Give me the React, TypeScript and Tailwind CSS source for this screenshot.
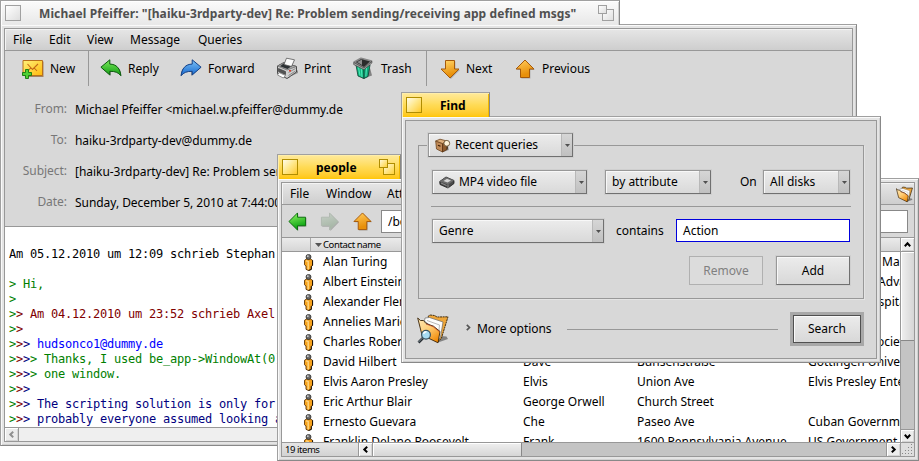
import React from "react";

const TITLE = "text-[12px] font-bold leading-[16px] whitespace-pre";

function CloseBox({ active }: { active: boolean }) {
  return (
    <span
      className={
        active
          ? "block size-4 shrink-0 border border-[#b08d00] bg-linear-to-br from-[#fffbe8] via-[#ffe787] to-[#ffca10]"
          : "block size-4 shrink-0 border border-[#a0a0a0] bg-linear-to-br from-[#ffffff] to-[#dedede]"
      }
    />
  );
}

function ZoomBox({ active }: { active: boolean }) {
  const stroke = active ? "#b08d00" : "#a0a0a0";
  const id = active ? "zoomActive" : "zoomIdle";
  return (
    <svg width="16" height="16" viewBox="0 0 16 16" className="block shrink-0">
      <defs>
        <linearGradient id={id} x1="0" y1="0" x2="1" y2="1">
          <stop offset="0" stopColor={active ? "#fffbe0" : "#ffffff"} />
          <stop offset="1" stopColor={active ? "#ffd030" : "#dedede"} />
        </linearGradient>
      </defs>
      <rect x="4.5" y="4.5" width="11" height="11" fill={`url(#${id})`} stroke={stroke} />
      <rect x="0.5" y="0.5" width="8" height="8" fill={`url(#${id})`} stroke={stroke} />
    </svg>
  );
}

function WindowTab({ title, active, zoom, className, track }: { title: string; active: boolean; zoom: boolean; className: string; track: string }) {
  const skin = active
    ? "border-[#a0a0a0] border-r-[#888888] bg-linear-to-b from-[#ffea9a] via-[#ffdb55] to-[#ffc600] shadow-[inset_1px_1px_0_#ffeeaa,inset_-1px_0_0_#f0b800]"
    : "border-[#a0a0a0] border-r-[#888888] bg-linear-to-b from-[#fbfbfb] to-[#e8e8e8] shadow-[inset_1px_1px_0_#ffffff,inset_-1px_0_0_#d0d0d0]";
  return (
    <div className={`relative z-10 -mb-px flex h-[25px] items-start border border-b-0 pt-1 pl-1 ${skin} ${className}`}>
      <CloseBox active={active} />
      <span className={`${TITLE} grow ${track} ${active ? "text-black" : "text-[#505050]"}`}>{title}</span>
      {zoom && <ZoomBox active={active} />}
    </div>
  );
}

function Frame({ children, className }: { children: React.ReactNode; className: string }) {
  return (
    <div className={`border border-[#a0a0a0] border-r-[#888888] border-b-[#888888] bg-[#e4e4e4] p-[3px] shadow-[inset_1px_1px_0_#fafafa,inset_-1px_-1px_0_#d0d0d0] ${className}`}>
      <div className="flex h-full flex-col overflow-hidden border border-[#989898] bg-[#d8d8d8]">{children}</div>
    </div>
  );
}

function Arrow({ kind, fill, edge, className }: { kind: "left" | "right" | "up" | "down"; fill: [string, string]; edge: string; className: string }) {
  const shape = {
    left: "M1 10 10 1v4.500h8.500v9H10V19z",
    right: "M19 10 10 1v4.500H1.500v9H10V19z",
    up: "M10 1 1 10h4.500v8.500h9V10H19z",
    down: "M10 19 1 10h4.500V1.500h9V10H19z",
  }[kind];
  const id = `arrow-${kind}-${fill[1].slice(1)}`;
  return (
    <svg width="20" height="20" viewBox="0 0 20 20" className={className}>
      <defs>
        <linearGradient id={id} x1="0" y1="0" x2=".3" y2="1">
          <stop offset="0.1" stopColor={fill[0]} />
          <stop offset="0.9" stopColor={fill[1]} />
        </linearGradient>
      </defs>
      <path d={shape} transform="translate(.9 .9)" fill="#000" opacity=".22" />
      <path d={shape} fill={`url(#${id})`} stroke={edge} strokeWidth="1" strokeLinejoin="round" />
    </svg>
  );
}

function NewMailIcon() {
  return (
    <svg width="22" height="20" viewBox="0 0 22 20" className="block">
      <defs>
        <linearGradient id="mail" x1="0" y1="0" x2="1" y2="1">
          <stop offset="0" stopColor="#fff27a" />
          <stop offset="1" stopColor="#ffb90c" />
        </linearGradient>
      </defs>
      <path d="M2 2.500h19.500V18H3z" fill="#8b6030" opacity=".7" />
      <path d="M1 1.500h19.500v15H1z" fill="url(#mail)" stroke="#b8701c" />
      <path d="M6 12l3-3.500M15 12l-3.200-3.500M5.500 5l5 5.500L16 5" fill="none" stroke="#c56a16" strokeWidth="1.100" />
      <path d="M3.500 10.500h3v3h3v3h-3v3h-3v-3h-3v-3h3z" fill="#4ed034" stroke="#15770e" strokeWidth=".9" />
    </svg>
  );
}

function ReplyIcon({ flip }: { flip?: boolean }) {
  const id = flip ? "fwd" : "rep";
  return (
    <svg width="22" height="19" viewBox="0 0 22 19" className="block">
      <defs>
        <linearGradient id={id} x1="0" y1="0" x2="0" y2="1">
          <stop offset="0" stopColor={flip ? "#7cc2f7" : "#7cec5c"} />
          <stop offset="1" stopColor={flip ? "#1567ce" : "#0f9a12"} />
        </linearGradient>
      </defs>
      <g transform={flip ? "translate(22 0) scale(-1 1)" : undefined}>
        <path d="M2 9.500 11 17v-4.500c5 0 8 1.500 10.500 5-.2-4-1.500-7-3-8.500z" fill="#000" opacity=".3" />
        <path d="M.9 8.200 9.800.8v4.300c6.500 0 10.600 4.500 11 11.600-2.400-3.200-5.500-4.400-11-4.400V16z" fill={`url(#${id})`} stroke={flip ? "#123f86" : "#0a5a0c"} strokeLinejoin="round" />
      </g>
    </svg>
  );
}

function PrintIcon() {
  return (
    <svg width="23" height="23" viewBox="0 0 23 23" className="block">
      <path d="M9 22 22 16v-3l-9 8z" fill="#666" opacity=".6" />
      <path d="M1.500 9 8 5.500 20.500 9.500V15L11 21.500 1.500 16.500z" fill="#cfcfcf" stroke="#3d3d3d" strokeWidth=".9" />
      <path d="M1.500 9 11 13l9.500-3.500L8 5.500z" fill="#a8a8a8" stroke="#666" strokeWidth=".7" />
      <path d="M4 9.300 7.500 6.500l9 2-5 3.500z" fill="#2c3134" />
      <path d="M8 7.500 10.500 1.200l8 1.600-3 6.700z" fill="#fafafa" stroke="#555" strokeWidth=".8" />
      <path d="M2.500 11.500l7 3v3l-7-3z" fill="#555" stroke="#333" strokeWidth=".6" />
      <path d="M3 15.500l6.500 3-2.200 2.500L1.500 18z" fill="#fff" stroke="#666" strokeWidth=".7" />
      <path d="M12.500 15.500l7-4M12.500 18.500l7-4.500" stroke="#8a8a8a" />
      <path d="M13 13.700h2" stroke="#e23c2a" strokeWidth="1.500" />
    </svg>
  );
}

function TrashIcon() {
  return (
    <svg width="20" height="23" viewBox="0 0 20 23" className="block">
      <path d="M9 22 19 18.500 17 11z" fill="#555" opacity=".65" />
      <path d="M3 8l2 11 6 2.500V11z" fill="#12b880" stroke="#0b3f30" strokeWidth=".8" />
      <path d="M11 11v10.500l4-2L17 8z" fill="#0fa87a" stroke="#0b3f30" strokeWidth=".8" />
      <path d="M5.500 10.500l1.500 8M8.300 11.500l.7 8.500M13.500 11l-.7 8.500" stroke="#4fe8b8" />
      <path d="M1.200 5 8 1.200 18.500 4 11 11z" fill="#2b2b2b" stroke="#888" strokeWidth="1.600" strokeLinejoin="round" />
      <path d="M4 5l5-2.500V8z" fill="#8c8c8c" />
      <path d="M.700 5.500v2L11 12.700 18.900 6V4.300L11 11z" fill="#aaa" stroke="#333" strokeWidth=".6" />
    </svg>
  );
}

function PersonIcon() {
  return (
    <svg width="11" height="17" viewBox="0 0 11 17" className="block">
      <path d="M1.500 6.300 3.500 5h4l2 1.300v5L8.300 12.500v2.800L5.500 16.500 3 15.300V12L1.500 10.800z" fill="#f7a31c" stroke="#5c3408" strokeWidth=".9" />
      <path d="M3 6.800l2.200.8v7.600" fill="none" stroke="#ffd27a" strokeWidth="1.500" />
      <path d="M9.600 6.300v5L8.300 12.500v2.900L5.500 16.600" fill="none" stroke="#1c1003" strokeWidth="1" />
      <circle cx="5.500" cy="2.900" r="2.500" fill="#6c6c6c" stroke="#222" strokeWidth=".7" />
      <circle cx="4.800" cy="2.200" r=".9" fill="#ccc" />
    </svg>
  );
}

function FolderQueryIcon({ size, lens }: { size: number; lens?: boolean }) {
  const id = lens ? "folderLarge" : "folderSmall";
  const edge = lens ? 0.9 : 1.3;
  return (
    <svg width={size} height={size} viewBox="0 0 32 32" className="block">
      <defs>
        <linearGradient id={id} x1="0" y1="0" x2=".7" y2="1">
          <stop offset="0" stopColor="#ffe9b8" />
          <stop offset=".5" stopColor="#ffcf7a" />
          <stop offset="1" stopColor="#f28c0a" />
        </linearGradient>
      </defs>
      <path d="M21 29.500 31 26l-1.500-2.500L24 23z" fill="#555" opacity=".65" />
      <path d="M11 3.500 13 2l4.500.5L20 4l11-.2L24.500 25 21 29z" fill="#eda63a" stroke="#2f1d05" strokeWidth={edge} strokeDasharray={lens ? "2 .6" : undefined} />
      <path d="M7.500 8 8 5l4.500-.5L26 9l-2.500 15-2.500 4-5-13z" fill="#fdfdfd" stroke="#6a6a6a" strokeWidth=".7" />
      <path d="M10 7.500l12.500 4.500-.8 8" fill="none" stroke="#b0b0b0" strokeWidth=".9" />
      <path d="M.7 5 3.500 7.500h3L9 10.500l7.500 2.700L23 18.500l-2 11.300L5 22z" fill={`url(#${id})`} stroke="#3a2408" strokeWidth={edge} strokeLinejoin="round" />
      <path d="M9 11l7 2.600 6.500 5.200" fill="none" stroke="#c4442a" strokeWidth=".7" />
      {lens && (
        <g>
          <path d="M6 25 1.500 29.500" stroke="#252b30" strokeWidth="2.600" />
          <path d="M5.500 25 1.500 29" stroke="#9fb0b8" strokeWidth=".8" />
          <circle cx="9" cy="21.700" r="4.400" fill="#a7dcf2" stroke="#39535f" strokeWidth="1.200" />
          <path d="M6.500 20.800a3 3 0 0 1 3-2" fill="none" stroke="#fff" strokeWidth="1.400" />
        </g>
      )}
    </svg>
  );
}

function BoxIcon() {
  return (
    <svg width="16" height="15" viewBox="0 0 16 15" className="block">
      <path d="M7 14.500 14 12l-1-4z" fill="#666" opacity=".5" />
      <path d="M.7 3 7.500 5.500V14L1.500 11z" fill="#c08a58" stroke="#6d4520" strokeWidth=".8" />
      <path d="M7.500 5.500 12 3v8.500L7.500 14z" fill="#8f5b2c" stroke="#5b3210" strokeWidth=".8" />
      <path d="M.7 3 5 1.200 12 3 7.500 5.500z" fill="#e0b07c" stroke="#6d4520" strokeWidth=".8" />
      <path d="M3 7.200l2.500 1" stroke="#3b1d05" strokeWidth="1.200" />
      <circle cx="11.800" cy="5.300" r="2.900" fill="#fff4da" stroke="#6b5638" strokeWidth=".9" />
      <path d="M12.500 8.500l-.5 3" stroke="#4a3a28" strokeWidth="1.300" />
    </svg>
  );
}

function ClapIcon() {
  return (
    <svg width="16" height="13" viewBox="0 0 16 13" className="block">
      <path d="M.7 5.500 7 1l8 3.500v3L9 12 1 8.500z" fill="#4a4a4a" stroke="#1c1c1c" strokeWidth=".8" />
      <path d="M.7 5.500 7 1l8 3.500L9 8.500z" fill="#6d6d6d" />
      <path d="M4.500 5 8 2.800l4 1.700-3.500 2z" fill="#d6d6d6" />
      <path d="M9 8.500V12M2 7l5.500 2.500" stroke="#a0a0a0" strokeWidth=".8" />
    </svg>
  );
}

function ScrollArrow({ dir, muted, className }: { dir: "l" | "r" | "u" | "d"; muted?: boolean; className: string }) {
  const turn = { l: 0, u: 90, r: 180, d: 270 }[dir];
  return (
    <span className={`flex shrink-0 items-center justify-center border-[#989898] bg-[#ececec] shadow-[inset_1px_1px_0_#fff,inset_-1px_-1px_0_#d4d4d4] ${className}`}>
      <svg width="7" height="7" viewBox="0 0 7 7">
        <path d="M5.200.8 2.300 3.500 5.200 6.200" transform={`rotate(${turn} 3.5 3.5)`} fill="none" stroke={muted ? "#909090" : "#000"} strokeWidth="2" />
      </svg>
    </span>
  );
}

function MenuBar({ children }: { children: React.ReactNode }) {
  return (
    <div className="flex h-[22px] shrink-0 border-b border-[#989898] bg-linear-to-b from-[#e6e6e6] to-[#cecece] leading-[21px] shadow-[inset_1px_1px_0_#f4f4f4]">
      {children}
    </div>
  );
}

const HEADERS: [string, string][] = [
  ["From:", "Michael Pfeiffer <michael.w.pfeiffer@dummy.de"],
  ["To:", "haiku-3rdparty-dev@dummy.de"],
  ["Subject:", "[haiku-3rdparty-dev] Re: Problem sending"],
  ["Date:", "Sunday, December 5, 2010 at 7:44:00"],
];

const QUOTE = ["text-[#008000]", "text-[#800000]", "text-[#000080]", "text-[#008000]"];

const LINES: [number, string, string][] = [
  [0, "", ""],
  [0, "Am 05.12.2010 um 12:09 schrieb Stephan", "text-black"],
  [0, "", ""],
  [1, " Hi,", "text-[#008000]"],
  [1, "", ""],
  [2, " Am 04.12.2010 um 23:52 schrieb Axel", "text-[#800000]"],
  [2, "", ""],
  [3, " hudsonco1@dummy.de", "text-[#0000ff]"],
  [4, " Thanks, I used be_app->WindowAt(0)", "text-[#008000]"],
  [4, " one window.", "text-[#008000]"],
  [3, "", ""],
  [3, " The scripting solution is only for", "text-[#000080]"],
  [3, " probably everyone assumed looking at", "text-[#000080]"],
];

function Tool({ icon, label, className, gap }: { icon: React.ReactNode; label: string; className: string; gap: string }) {
  return (
    <div className={`flex items-center ${gap} ${className}`}>
      {icon}
      <span className="leading-[16px]">{label}</span>
    </div>
  );
}

function MailWindow() {
  return (
    <section className="absolute top-0 left-0 w-[857px]">
      <WindowTab title={'Michael Pfeiffer: "[haiku-3rdparty-dev] Re: Problem sending/receiving app defined msgs"'} active={false} zoom className="w-[620px] pr-[5px]" track="pl-[18px] pt-px tracking-[0.095px]" />
      <Frame className="h-[422px]">
        <MenuBar>
          <span className="ml-2 w-9">File</span>
          <span className="w-[38px]">Edit</span>
          <span className="w-[43px]">View</span>
          <span className="w-[68px]">Message</span>
          <span>Queries</span>
        </MenuBar>
        <div className="flex h-[35px] shrink-0">
          <div className="flex w-[84px] border-r border-[#989898] pl-[17px]">
            <Tool icon={<NewMailIcon />} label="New" className="" gap="gap-1.5" />
          </div>
          <div className="flex w-[338px] border-r border-[#989898] pl-[11px]">
            <Tool icon={<ReplyIcon />} label="Reply" className="w-20" gap="gap-1.5" />
            <Tool icon={<ReplyIcon flip />} label="Forward" className="w-24" gap="gap-1.5" />
            <Tool icon={<PrintIcon />} label="Print" className="w-[77px]" gap="gap-[5px]" />
            <Tool icon={<TrashIcon />} label="Trash" className="" gap="gap-2" />
          </div>
          <div className="flex pl-[13px]">
            <Tool icon={<Arrow kind="down" fill={["#ffd061", "#e8900a"]} edge="#a5590a" className="block" />} label="Next" className="w-[75px]" gap="gap-1.5" />
            <Tool icon={<Arrow kind="up" fill={["#ffc655", "#e8900a"]} edge="#a5590a" className="block" />} label="Previous" className="" gap="gap-[7px]" />
          </div>
        </div>
        <div className="h-[141px] shrink-0 border-b border-[#989898] pt-2">
          {HEADERS.map(([k, v]) => (
            <div key={k} className="flex h-[31px] items-center gap-2 tracking-[-0.045px] whitespace-pre">
              <span className="w-[62px] pb-px text-right text-[#777777]">{k}</span>
              <span className="pt-px">{v}</span>
            </div>
          ))}
        </div>
        <div className="grow overflow-hidden bg-white pt-[5px] pl-1 font-['DejaVu_Sans_Mono',monospace] tracking-[-0.224px]">
          {LINES.map(([depth, text, color], i) => (
            <div key={i} className="h-[15px] leading-[15px] whitespace-pre">
              {QUOTE.slice(0, depth).map((q, j) => (
                <span key={j} className={q}>{">"}</span>
              ))}
              <span className={color}>{text}</span>
            </div>
          ))}
        </div>
        <div className="flex h-[14px] shrink-0 border-t border-[#989898] bg-[#efefef]">
          <ScrollArrow dir="l" muted className="w-[14px] border-r" />
        </div>
      </Frame>
    </section>
  );
}

const PEOPLE = [
  ["Alan Turing", "", "", "University of Manchester"],
  ["Albert Einstein", "", "", "Institute for Advanced"],
  ["Alexander Fleming", "", "", "St Mary's Hospital"],
  ["Annelies Marie", "", "", ""],
  ["Charles Robert", "", "", "Geological Society"],
  ["David Hilbert", "Dave", "Bunsenstraße", "Göttingen University"],
  ["Elvis Aaron Presley", "Elvis", "Union Ave", "Elvis Presley Enterprises"],
  ["Eric Arthur Blair", "George Orwell", "Church Street", ""],
  ["Ernesto Guevara", "Che", "Paseo Ave", "Cuban Government"],
  ["Franklin Delano Roosevelt", "Frank", "1600 Pennsylvania Avenue", "US Government"],
];

function PeopleWindow() {
  return (
    <section className="absolute top-[154px] left-[277px] w-[642px]">
      <WindowTab title="people" active zoom className="w-[124px] pr-[5px]" track="pl-[18px] pt-px" />
      <Frame className="h-[283px]">
        <MenuBar>
          <span className="ml-2 w-9">File</span>
          <span className="w-[61px]">Window</span>
          <span className="grow">Attributes</span>
          <span className="mt-[3px] mr-px"><FolderQueryIcon size={17} /></span>
        </MenuBar>
        <div className="flex h-[33px] shrink-0 items-center border-b border-[#989898] pl-1.5">
          <Arrow kind="left" fill={["#8af060", "#13a817"]} edge="#0a6b0c" className="mr-[13px] block size-[19px]" />
          <Arrow kind="right" fill={["#c4cdc4", "#a8b8a8"]} edge="#b0b8b0" className="mr-[14px] block size-[19px]" />
          <Arrow kind="up" fill={["#ffc655", "#e8900a"]} edge="#a5590a" className="mr-[9px] block size-[19px]" />
          <div className="mr-1.5 h-[23px] grow border border-[#888888] bg-white pl-1.5 leading-[21px]">/boot/home/people</div>
        </div>
        <div className="flex min-h-0 grow">
          <div className="flex w-[618px] flex-col overflow-hidden">
            <div className="flex h-[14px] shrink-0 items-center border-b border-[#989898] bg-linear-to-b from-[#ebebeb] to-[#d6d6d6] text-[9.500px] leading-[13px] tracking-[-0.38px]">
              <span className="h-full w-[29px] border-r border-[#a8a8a8]" />
              <svg width="7" height="4" viewBox="0 0 7 4" className="mr-px ml-1"><path d="M0 0h7L3.500 4z" fill="#555" /></svg>
              <span>Contact name</span>
            </div>
            <div className="min-h-0 grow overflow-hidden bg-white">
              {PEOPLE.map((p) => (
                <div key={p[0]} className="flex h-5 items-center leading-5 whitespace-nowrap">
                  <span className="ml-[21px] w-5 shrink-0"><PersonIcon /></span>
                  <span className="w-[200px] shrink-0">{p[0]}</span>
                  <span className="w-[114px] shrink-0">{p[1]}</span>
                  <span className="w-[171px] shrink-0">{p[2]}</span>
                  <span className="shrink-0">{p[3]}</span>
                </div>
              ))}
            </div>
          </div>
          <div className="flex w-[14px] shrink-0 flex-col border-l border-[#989898] bg-[#c4c4c4]">
            <ScrollArrow dir="u" className="h-[14px] border-b" />
            <span className="h-[89px] border-b border-[#888888] bg-linear-to-r from-[#f0f0f0] to-[#d6d6d6] shadow-[inset_1px_1px_0_#fff]" />
            <span className="grow" />
            <ScrollArrow dir="d" className="h-[13px] border-t" />
          </div>
        </div>
        <div className="flex h-[14px] shrink-0 border-t border-[#989898] bg-[#c4c4c4]">
          <span className="w-[77px] border-r border-[#989898] bg-linear-to-b from-[#e6e6e6] to-[#d2d2d2] pl-[3px] text-[9.500px] leading-[14px] tracking-[-0.45px]">19 items</span>
          <ScrollArrow dir="l" className="w-[14px] border-r" />
          <span className="w-[149px] border-r border-[#888888] bg-linear-to-b from-[#f0f0f0] to-[#d6d6d6] shadow-[inset_1px_1px_0_#fff]" />
          <span className="grow" />
          <ScrollArrow dir="r" className="w-[14px] border-l" />
          <span className="flex w-[14px] items-end justify-end border-l border-[#989898] bg-[#dedede]">
            <svg width="12" height="12" viewBox="0 0 12 12">
              {[[9, 0], [9, 3], [6, 3], [9, 6], [6, 6], [3, 6], [9, 9], [6, 9], [3, 9], [0, 9]].map(([x, y]) => (
                <rect key={`${x}-${y}`} x={x} y={y} width="1" height="1" fill="#888" />
              ))}
            </svg>
          </span>
        </div>
      </Frame>
    </section>
  );
}

function Popup({ icon, label, className }: { icon?: React.ReactNode; label: string; className: string }) {
  return (
    <div className={`flex h-6 items-center border border-[#989898] border-r-[#707070] border-b-[#707070] bg-linear-to-b from-[#ececec] to-[#d9d9d9] pl-1.5 shadow-[inset_1px_1px_0_#f8f8f8,0_0_0_1px_#cfcfcf] ${className}`}>
      {icon}
      <span className="grow">{label}</span>
      <span className="flex h-full w-[11px] items-center justify-center border-l border-[#b8b8b8] bg-linear-to-b from-[#d6d6d6] to-[#c0c0c0]">
        <svg width="5" height="3" viewBox="0 0 5 3"><path d="M0 0h5L2.500 3z" fill="#505050" /></svg>
      </span>
    </div>
  );
}

function FindWindow() {
  return (
    <section className="absolute top-[92px] left-[401px] w-[480px]">
      <WindowTab title="Find" active zoom={false} className="w-[89px]" track="pl-[18px] pt-px" />
      <Frame className="h-[247px]">
        <div className="mt-3 ml-[22px] flex h-6 shrink-0">
          <Popup icon={<span className="mr-1"><BoxIcon /></span>} label="Recent queries" className="relative z-10 w-[145px] tracking-[-0.05px]" />
        </div>
        <div className="-mt-3 mr-3 ml-3 flex h-[154px] shrink-0 flex-col border border-[#989898] px-[13px] pt-6 shadow-[1px_1px_0_#e4e4e4]">
          <div className="flex items-center">
            <Popup icon={<span className="mr-1"><ClapIcon /></span>} label="MP4 video file" className="w-[155px] tracking-[-0.07px]" />
            <Popup label="by attribute" className="ml-[18px] w-[106px]" />
            <span className="ml-[29px] w-[23px]">On</span>
            <Popup label="All disks" className="w-[87px]" />
          </div>
          <div className="mt-3 -mr-px -ml-px h-px bg-[#989898]" />
          <div className="mt-3 flex items-center">
            <Popup label="Genre" className="w-[172px]" />
            <span className="ml-3 w-[60px]">contains</span>
            <div className="mb-px h-[23px] w-[174px] border border-[#0000dd] bg-white pl-1.5 leading-[21px]">Action</div>
          </div>
          <div className="mt-[13px] flex justify-end gap-[13px] text-center leading-[28px]">
            <div className="h-[29px] w-[74px] border border-[#b0b0b0] bg-[#dcdcdc] text-[#808080]">Remove</div>
            <div className="h-[29px] w-[74px] border border-[#989898] border-r-[#707070] border-b-[#707070] bg-linear-to-b from-[#ececec] to-[#d8d8d8] shadow-[inset_1px_1px_0_#f8f8f8,0_0_0_1px_#cfcfcf]">Add</div>
          </div>
        </div>
        <div className="mt-[13px] flex h-[34px] items-center pr-3 pl-[11px]">
          <FolderQueryIcon size={32} lens />
          <svg width="5" height="7" viewBox="0 0 5 7" className="mb-[3px] ml-[17px]"><path d="M.8.800 3.500 3.500.8 6.200" fill="none" stroke="#555" strokeWidth="1.700" /></svg>
          <span className="ml-[6px] w-[90px] tracking-[-0.07px]">More options</span>
          <span className="h-px w-[211px] bg-[#989898]" />
          <span className="grow" />
          <div className="h-[34px] w-[74px] border-[3px] border-[#a8a8a8] bg-[#a8a8a8]">
            <div className="h-full border border-[#505050] bg-linear-to-b from-[#ececec] to-[#d8d8d8] text-center leading-[26px] shadow-[inset_1px_1px_0_#fafafa]">Search</div>
          </div>
        </div>
      </Frame>
    </section>
  );
}

export default function App() {
  return (
    <main className="relative h-[461px] w-[919px] overflow-hidden bg-white font-['Noto_Sans',sans-serif] text-[12px] leading-[16px] text-black">
      <MailWindow />
      <PeopleWindow />
      <FindWindow />
    </main>
  );
}
